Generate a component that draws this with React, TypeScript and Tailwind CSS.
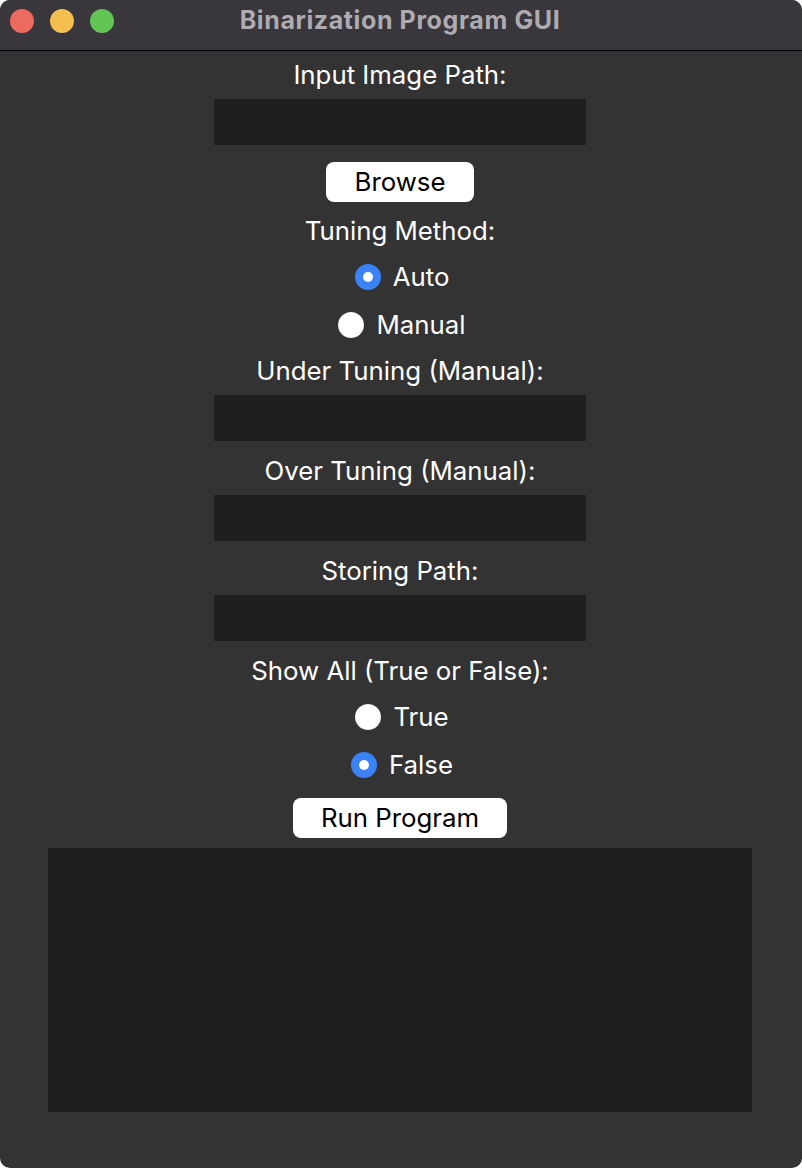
import React from "react";

const font = { fontFamily: "Inter, 'Liberation Sans', sans-serif" };

function Label({ text, mt }: { text: string; mt: string }) {
  return (
    <div className={`${mt} h-[30px] flex items-center justify-center text-[25.8px] leading-[30px] text-white`}>
      {text}
    </div>
  );
}

function Field({ mt }: { mt: string }) {
  return <div className={`${mt} w-[372px] h-[46px] bg-[#1f1f1f]`} />;
}

function Radio({ label, checked }: { label: string; checked?: boolean }) {
  return (
    <div className="h-[48px] flex items-center justify-center gap-[12px] pl-[4px]">
      {checked ? (
        <div className="w-[26px] h-[26px] rounded-full bg-[#3b82f6] flex items-center justify-center">
          <div className="w-[10px] h-[10px] rounded-full bg-white" />
        </div>
      ) : (
        <div className="w-[26px] h-[26px] rounded-full bg-white shadow-[inset_0_0_1px_rgba(0,0,0,0.3)]" />
      )}
      <span className="text-[25.8px] leading-[30px] text-white">{label}</span>
    </div>
  );
}

export default function App() {
  return (
    <div style={font} className="w-[802px] h-[1168px] bg-[#333333] flex flex-col overflow-hidden rounded-[10px]">
      <div className="h-[50px] shrink-0 bg-[#39373c] relative flex items-center justify-center border-b border-black box-content">
        <div className="absolute left-[10px] top-[9px] flex gap-[16px]">
          <div className="w-[24px] h-[24px] rounded-full bg-[#ed6a5e]" />
          <div className="w-[24px] h-[24px] rounded-full bg-[#f5bf4f]" />
          <div className="w-[24px] h-[24px] rounded-full bg-[#61c554]" />
        </div>
        <span className="text-[25px] font-bold tracking-[0.6px] text-[#aeabb1] -mt-[8px] pr-[2px]">Binarization Program GUI</span>
      </div>
      <div className="flex flex-col items-center pr-[2px]">
        <Label text="Input Image Path:" mt="mt-[9px]" />
        <Field mt="mt-[9px]" />
        <button className="mt-[17px] w-[148px] h-[40px] bg-white rounded-[8px] text-black text-[25.8px] leading-[30px] flex items-center justify-center">
          Browse
        </button>
        <Label text="Tuning Method:" mt="mt-[14px]" />
        <div className="mt-[7px]">
          <Radio label="Auto" checked />
          <Radio label="Manual" />
        </div>
        <Label text="Under Tuning (Manual):" mt="mt-[7px]" />
        <Field mt="mt-[9px]" />
        <Label text="Over Tuning (Manual):" mt="mt-[15px]" />
        <Field mt="mt-[9px]" />
        <Label text="Storing Path:" mt="mt-[15px]" />
        <Field mt="mt-[9px]" />
        <Label text="Show All (True or False):" mt="mt-[15px]" />
        <div className="mt-[7px]">
          <Radio label="True" />
          <Radio label="False" checked />
        </div>
        <button className="mt-[9px] w-[214px] h-[40px] bg-white rounded-[8px] text-black text-[25.8px] leading-[30px] flex items-center justify-center">
          Run Program
        </button>
        <div className="mt-[10px] w-[704px] h-[264px] bg-[#1f1f1f]" />
      </div>
    </div>
  );
}
